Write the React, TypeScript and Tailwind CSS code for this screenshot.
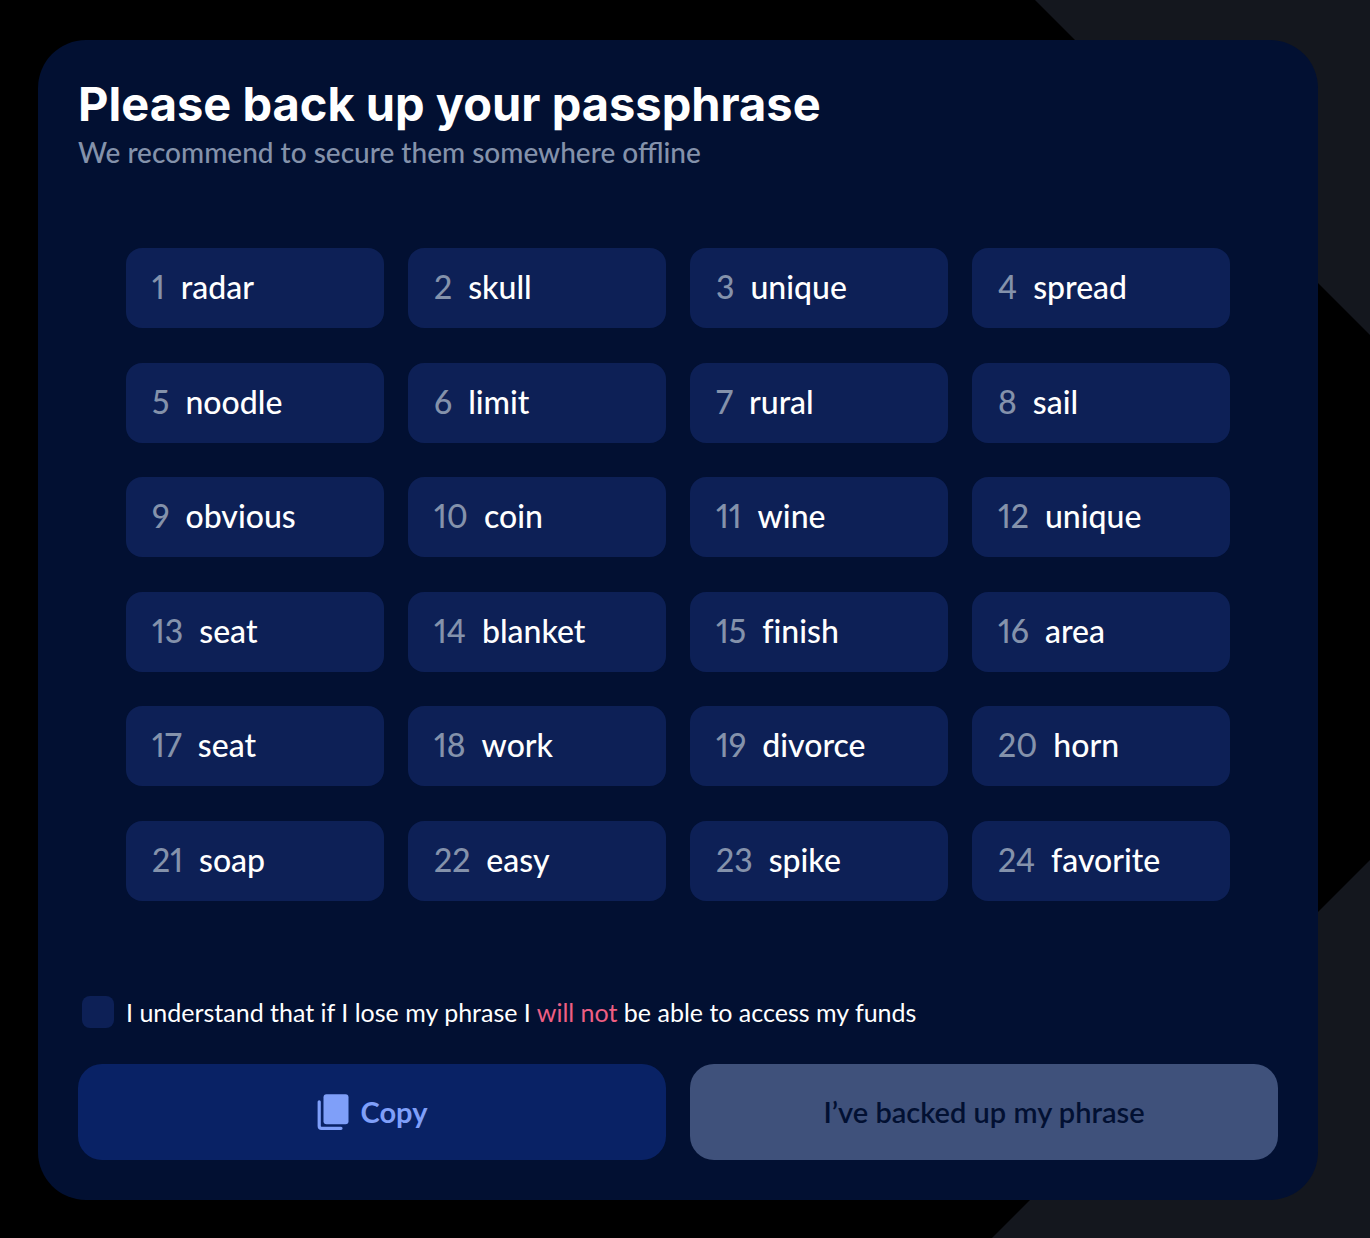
import React, { useState } from 'react';

const WORDS = [
  'radar', 'skull', 'unique', 'spread',
  'noodle', 'limit', 'rural', 'sail',
  'obvious', 'coin', 'wine', 'unique',
  'seat', 'blanket', 'finish', 'area',
  'seat', 'work', 'divorce', 'horn',
  'soap', 'easy', 'spike', 'favorite',
];

const CopyIcon: React.FC = () => (
  <svg width="32" height="36" viewBox="0 0 32 36" fill="none" aria-hidden="true">
    <rect x="6.5" y="0.3" width="25" height="30" rx="3" fill="currentColor" />
    <path d="M2.2 7.8V32Q2.2 34.3 4.5 34.3H24" stroke="currentColor" strokeWidth="3.2" strokeLinecap="round" />
  </svg>
);

interface WordCardProps {
  index: number;
  word: string;
}

const WordCard: React.FC<WordCardProps> = ({ index, word }) => (
  <li className="flex h-20 items-center gap-4 rounded-2xl bg-[#0d2056] px-[26px] pb-0.5 text-[32px] leading-10 font-medium">
    <span className="proportional-nums text-[#8492ab]">{index}</span>
    <span className="text-white [font-variant-ligatures:none]">{word}</span>
  </li>
);

const App: React.FC = () => {
  const [confirmed, setConfirmed] = useState(false);

  const copyPhrase = () => {
    navigator.clipboard?.writeText(WORDS.join(' '));
  };

  return (
    <div className="relative flex min-h-screen overflow-hidden bg-black pt-10 pr-[52px] pb-[38px] pl-[38px] font-[Lato,'Open_Sans',sans-serif]">
      {/* background corners */}
      <svg className="absolute top-0 right-0 text-[#14171e]" width="335" height="335" aria-hidden="true">
        <path d="M0 0H335V335Z" fill="currentColor" />
      </svg>
      <svg className="absolute right-0 bottom-0 text-[#14171e]" width="378" height="378" aria-hidden="true">
        <path d="M378 0V378H0Z" fill="currentColor" />
      </svg>

      <main className="relative flex flex-1 flex-col rounded-[48px] bg-[#021032] p-10">
        <header>
          <h1 className="font-[Inter,sans-serif] text-[47px] leading-12 font-bold text-white">
            Please back up your passphrase
          </h1>
          <p className="mt-1 text-[28px] leading-10 font-medium text-[#8492ab]">We recommend to secure them somewhere offline</p>
        </header>

        <ol className="mt-[76px] mb-[95px] grid flex-1 grid-cols-4 content-between gap-x-6 gap-y-8 px-12">
          {WORDS.map((word, i) => (
            <WordCard key={i} index={i + 1} word={word} />
          ))}
        </ol>

        <label className="flex items-center gap-3 pl-1 text-[25px] leading-8 text-white">
          <input
            type="checkbox"
            checked={confirmed}
            onChange={(e) => setConfirmed(e.target.checked)}
            className="size-8 shrink-0 appearance-none rounded-lg bg-[#0d2056] checked:bg-[#7f9ff9]"
          />
          <span>
            I understand that if I lose my phrase I <span className="text-[#ee5f83]">will not</span> be able to access my funds
          </span>
        </label>

        <div className="mt-9 grid grid-cols-2 gap-6 text-[29px] leading-8">
          <button
            type="button"
            onClick={copyPhrase}
            className="flex h-24 items-center justify-center gap-3 rounded-3xl bg-[#092265] font-bold text-[#7f9ff9]"
          >
            <CopyIcon />
            Copy
          </button>
          <button
            type="button"
            disabled={!confirmed}
            className="h-24 rounded-3xl bg-[#7f9ff9] font-semibold text-[#021032] disabled:bg-[#3f517b]"
          >
            I’ve backed up my phrase
          </button>
        </div>
      </main>
    </div>
  );
};

export default App;
